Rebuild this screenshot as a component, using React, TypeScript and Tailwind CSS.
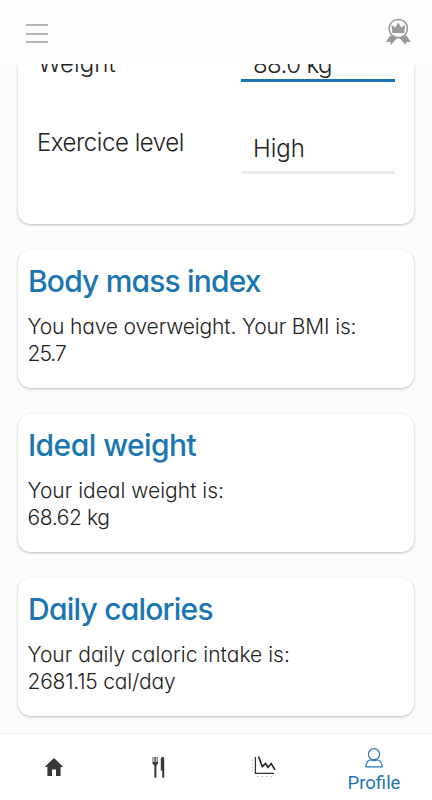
import type { ReactNode } from "react";

const FONT = "font-['Inter','Lato',sans-serif] [font-feature-settings:'cv11','ss03']";

type Card = {
  title: string;
  text: string;
  value: string;
  titleSpacing: string;
  textSpacing: string;
  valueSpacing: string;
};

const CARDS: Card[] = [
  {
    title: "Body mass index",
    text: "You have overweight. Your BMI is:",
    value: "25.7",
    titleSpacing: "tracking-[-0.83px]",
    textSpacing: "tracking-[-0.15px]",
    valueSpacing: "tracking-[-1px]",
  },
  {
    title: "Ideal weight",
    text: "Your ideal weight is:",
    value: "68.62 kg",
    titleSpacing: "tracking-[-0.55px]",
    textSpacing: "tracking-[0px]",
    valueSpacing: "tracking-[-0.4px]",
  },
  {
    title: "Daily calories",
    text: "Your daily caloric intake is:",
    value: "2681.15 cal/day",
    titleSpacing: "tracking-[-0.77px]",
    textSpacing: "tracking-[0.02px]",
    valueSpacing: "tracking-[-0.2px]",
  },
];

function Medal() {
  return (
    <svg width="26" height="28" viewBox="0 0 26 28" fill="#999">
      <path d="M4.2 17.6 L0 24 L4.2 23.8 L4.9 27 L11.2 20 Z" />
      <path d="M20.4 17.6 L25 24 L20.6 23.8 L19.8 27 L13.4 20 Z" />
      <circle cx="12.3" cy="10.6" r="9.2" fill="#fdfdfd" stroke="#999" strokeWidth="1.5" />
      <path d="M6.4 14.9 L5.5 7 L9.3 9.4 L12.3 4.6 L15.3 9.4 L19.1 7 L18.2 14.9 Z" />
    </svg>
  );
}

function HomeIcon() {
  return (
    <svg width="18" height="18" viewBox="0 0 18 18" fill="#383838">
      <path d="M9 0 L17.8 8.4 V9 H15.6 V18 H11 V11.6 H7 V18 H2.4 V9 H0.2 V8.4 Z" />
    </svg>
  );
}

function ForkKnifeIcon() {
  return (
    <svg width="13" height="21" viewBox="0 0 13 21">
      <path d="M0.4 0 H6 V6.6 L4.4 8.4 V20.2 Q3.4 21.2 2.4 20.2 V8.4 L0.4 6.6 Z" fill="#383838" />
      <path d="M0.4 0 H2.6 V5 H0.4 Z M3.6 0 H5.6 V5 H3.6 Z" fill="#bbb" />
      <path d="M8.8 13.4 V2 Q8.9 0 10.6 0 Q12.2 0 12.2 1.4 V20.4 Q11 21.2 10.2 20.4 V13.4 Z" fill="#383838" />
    </svg>
  );
}

function ChartIcon() {
  return (
    <svg width="24" height="22" viewBox="0 0 24 22" fill="none">
      <path d="M3.4 1 V17.4 H22" stroke="#333" strokeWidth="1.3" />
      <path d="M6.5 0.5 L10.3 10.6 L13.6 7.4 L16 11.3 L19.2 7.6 L23 13.8" stroke="#222" strokeWidth="1.6" />
      <path d="M0.6 4 V17" stroke="#aaa" strokeDasharray="1 2.6" />
      <path d="M5 20.6 H21" stroke="#999" strokeDasharray="1 3.6" />
    </svg>
  );
}

function ProfileIcon() {
  return (
    <svg width="18" height="20" viewBox="0 0 18 20" fill="none" stroke="#1976b2" strokeWidth="1.1">
      <circle cx="9" cy="6.2" r="5.6" />
      <path d="M5.4 11.8 C2.6 12.8 0.8 14.7 0.8 18.9 H17.2 C17.2 14.7 15.4 12.8 12.6 11.8 C10.4 13 7.6 13 5.4 11.8 Z" />
    </svg>
  );
}

function Tab({ children }: { children: ReactNode }) {
  return <div className="flex w-[105px] items-center justify-center">{children}</div>;
}

export default function App() {
  return (
    <div className={`flex h-[800px] w-[432px] flex-col overflow-hidden bg-[#fcfcfc] text-[#222] ${FONT}`}>
      <header className="flex h-[64px] shrink-0 items-start justify-between bg-[#fdfdfd] pl-[26px] pr-[20px]">
        <div className="mt-[24px] flex w-[22px] flex-col gap-[6.5px]">
          <span className="h-[2px] bg-[#b8b8b8]" />
          <span className="h-[2px] bg-[#b8b8b8]" />
          <span className="h-[2px] bg-[#b8b8b8]" />
        </div>
        <div className="mt-[18px]">
          <Medal />
        </div>
      </header>

      <main className="flex min-h-0 flex-1 flex-col gap-[26px] overflow-hidden px-[18px]">
        {/* form card, scrolled partly under the header */}
        <section className="h-[160px] shrink-0 rounded-b-[13px] bg-white pl-[20px] pr-[19px] text-[24px] font-light leading-[30px] shadow-[0_1px_3px_rgba(0,0,0,0.26)]">
          <div className="flex h-[18px] items-end justify-between">
            <span className="mb-[3px] tracking-[0.1px]">Weight</span>
            <div className="h-[33px] w-[154px] border-b-[3px] border-[#1976b2] pl-[12px] pt-[1px]">
              <span className="tracking-[-0.6px]">88.0 kg</span>
            </div>
          </div>
          <div className="mt-[46px] flex items-start justify-between">
            <span className="ml-[-1px] tracking-[-0.45px]">Exercice level</span>
            <div className="mt-[6px] h-[40px] w-[154px] border-b-[3px] border-[#ebebeb] pl-[12px]">
              <span>High</span>
            </div>
          </div>
        </section>

        {CARDS.map((c) => (
          <section
            key={c.title}
            className="h-[138px] shrink-0 rounded-[13px] bg-white px-[10px] pt-[12px] shadow-[0_1px_3px_rgba(0,0,0,0.26)]"
          >
            <h2 className="text-[30px] font-medium leading-[38px] text-[#1976b2]">
              <span className={c.titleSpacing}>{c.title}</span>
            </h2>
            <p className="ml-[-0.5px] mt-[13px] whitespace-nowrap text-[21px] font-light leading-[27px]">
              <span className={c.textSpacing}>{c.text}</span>
              <br />
              <span className={c.valueSpacing}>{c.value}</span>
            </p>
          </section>
        ))}
      </main>

      <nav className="flex h-[67px] shrink-0 border-t border-[#f1f1f1] bg-white pl-[1px]">
        <Tab><HomeIcon /></Tab>
        <Tab><ForkKnifeIcon /></Tab>
        <Tab><ChartIcon /></Tab>
        <div className="flex flex-1 flex-col items-center pt-[14px] text-[#1976b2]">
          <ProfileIcon />
          <span className="mt-[3px] font-['Roboto',sans-serif] text-[18.5px] leading-[24px]">Profile</span>
        </div>
      </nav>
    </div>
  );
}
